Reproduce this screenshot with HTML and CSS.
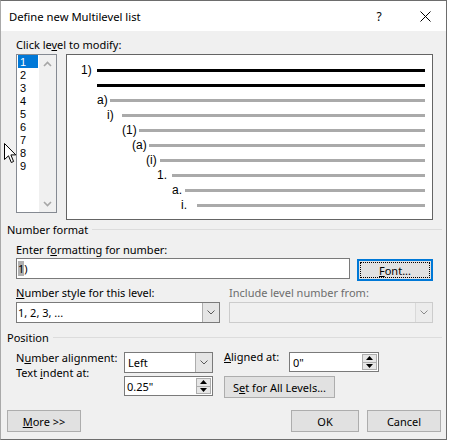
FILE: index.html
```html
<!DOCTYPE html>
<html>
<head>
<meta charset="utf-8">
<title>Define new Multilevel list</title>
<link rel="stylesheet" href="styles.css">
</head>
<body>
<div class="window">
  <div class="titlebar">
    <div class="title">Define new Multilevel list</div>
    <div class="tb-btn help">?</div>
    <div class="tb-btn close"><svg width="11" height="11" viewBox="0 0 11 11"><path d="M0.5 0.5L10.5 10.5M10.5 0.5L0.5 10.5" stroke="#000" stroke-width="1" fill="none"/></svg></div>
  </div>
  <div class="body">
    <div class="label first">Click le<u>v</u>el to modify:</div>
    <div class="top">
      <div class="listbox">
        <div class="items">
          <div class="item sel">1</div>
          <div class="item">2</div>
          <div class="item">3</div>
          <div class="item">4</div>
          <div class="item">5</div>
          <div class="item">6</div>
          <div class="item">7</div>
          <div class="item">8</div>
          <div class="item">9</div>
        </div>
        <div class="vscroll">
          <div class="sarrow"><svg width="9" height="6" viewBox="0 0 9 6"><polyline points="1,5 4.5,1.5 8,5" stroke="#a6a6a6" stroke-width="1.6" fill="none"/></svg></div>
          <div class="sarrow"><svg width="9" height="6" viewBox="0 0 9 6"><polyline points="1,1 4.5,4.5 8,1" stroke="#a6a6a6" stroke-width="1.6" fill="none"/></svg></div>
        </div>
      </div>
      <div class="preview">
        <div class="prow r1"><span class="plabel">1)</span><span class="pline black"></span></div>
        <div class="prow r2"><span class="pline black"></span></div>
        <div class="prow r3"><span class="plabel">a)</span><span class="pline"></span></div>
        <div class="prow r4"><span class="plabel">i)</span><span class="pline"></span></div>
        <div class="prow r5"><span class="plabel">(1)</span><span class="pline"></span></div>
        <div class="prow r6"><span class="plabel">(a)</span><span class="pline"></span></div>
        <div class="prow r7"><span class="plabel">(i)</span><span class="pline"></span></div>
        <div class="prow r8"><span class="plabel">1.</span><span class="pline"></span></div>
        <div class="prow r9"><span class="plabel">a.</span><span class="pline"></span></div>
        <div class="prow r10"><span class="plabel">i.</span><span class="pline"></span></div>
      </div>
    </div>

    <div class="group g1"><span class="gtext">Number format</span><span class="rule"></span></div>
    <div class="label fmt-label">Enter f<u>o</u>rmatting for number:</div>
    <div class="input-row">
      <div class="textbox"><span class="hl">1</span><span>)</span></div>
      <div class="btn font-btn"><span><u>F</u>ont...</span></div>
    </div>
    <div class="two labels">
      <div class="label half"><u>N</u>umber style for this level:</div>
      <div class="label half disabled-text">Include level number from:</div>
    </div>
    <div class="two selects">
      <div class="combo half">
        <div class="val">1, 2, 3, ...</div>
        <div class="arrow"><svg width="8" height="5" viewBox="0 0 8 5"><polyline points="0.5,0.5 4,4 7.5,0.5" stroke="#5a5a5a" stroke-width="1" fill="none"/></svg></div>
      </div>
      <div class="combo half disabled">
        <div class="val"></div>
        <div class="arrow"><svg width="8" height="5" viewBox="0 0 8 5"><polyline points="0.5,0.5 4,4 7.5,0.5" stroke="#8a8a8a" stroke-width="1" fill="none"/></svg></div>
      </div>
    </div>

    <div class="group g2"><span class="gtext">Position</span><span class="rule"></span></div>
    <div class="pos">
      <div class="pcol1">
        <div class="label">N<u>u</u>mber alignment:</div>
        <div class="label">Text <u>i</u>ndent at:</div>
      </div>
      <div class="pcol2">
        <div class="combo small">
          <div class="val">Left</div>
          <div class="arrow"><svg width="8" height="5" viewBox="0 0 8 5"><polyline points="0.5,0.5 4,4 7.5,0.5" stroke="#5a5a5a" stroke-width="1" fill="none"/></svg></div>
        </div>
        <div class="spin">
          <div class="val">0.25"</div>
          <div class="btns">
            <div class="b"><svg width="7" height="4" viewBox="0 0 7 4"><polygon points="0,4 3.5,0 7,4" fill="#000"/></svg></div>
            <div class="b"><svg width="7" height="4" viewBox="0 0 7 4"><polygon points="0,0 3.5,4 7,0" fill="#000"/></svg></div>
          </div>
        </div>
      </div>
      <div class="pcol3">
        <div class="aligned-row">
          <div class="label alabel"><u>A</u>ligned at:</div>
          <div class="spin aspin">
            <div class="val">0"</div>
            <div class="btns">
              <div class="b"><svg width="7" height="4" viewBox="0 0 7 4"><polygon points="0,4 3.5,0 7,4" fill="#000"/></svg></div>
              <div class="b"><svg width="7" height="4" viewBox="0 0 7 4"><polygon points="0,0 3.5,4 7,0" fill="#000"/></svg></div>
            </div>
          </div>
        </div>
        <div class="btn set-btn"><span>S<u>e</u>t for All Levels...</span></div>
      </div>
    </div>

    <div class="bottom">
      <div class="btn more"><span><u>M</u>ore &gt;&gt;</span></div>
      <div class="spacer"></div>
      <div class="btn ok"><span>OK</span></div>
      <div class="btn cancel"><span>Cancel</span></div>
    </div>
  </div>
  <svg class="cursor" width="13" height="21" viewBox="0 0 13 21"><path d="M0.5 0.5 L0.5 16.5 L4.5 12.8 L7.3 19.5 L9.6 18.5 L6.9 11.9 L11.8 11.9 Z" fill="#fff" stroke="#000" stroke-width="1" stroke-linejoin="miter"/></svg>
</div>
</body>
</html>
```

FILE: styles.css
```css
* { box-sizing: border-box; }
html, body { margin: 0; padding: 0; background: #ffffff; }
body {
  font-family: "Noto Sans", "Liberation Sans", sans-serif;
  font-size: 11px;
  line-height: 13px;
  color: #000;
}
u { text-underline-offset: 1px; }

.window {
  position: relative;
  width: 447px;
  height: 440px;
  border: 1px solid #6d6d6d;
  border-left-color: #a9a9a9;
  background: #f0f0f0;
  display: flex;
  flex-direction: column;
}

.titlebar {
  height: 30px;
  background: #ffffff;
  display: flex;
  align-items: center;
  padding-left: 8px;
  flex: none;
}
.title { flex: 1; font-size: 11.25px; white-space: nowrap; }
.tb-btn {
  height: 30px;
  display: flex;
  align-items: center;
  justify-content: center;
}
.help { width: 46px; font-size: 12px; }
.close { width: 44px; padding-left: 2px; }

.body {
  flex: 1;
  display: flex;
  flex-direction: column;
  padding: 0 13px 0 15px;
}

.label { height: 13px; white-space: nowrap; }
.first { margin-top: 7px; }

.top {
  display: flex;
  align-items: flex-start;
  gap: 9px;
  margin-top: 3px;
}
.listbox {
  width: 41px;
  height: 159px;
  border: 1px solid #858a92;
  background: #fff;
  display: flex;
}
.items { width: 22px; }
.item {
  height: 13px;
  margin: 0 1px;
  padding-left: 2px;
  font-family: "Liberation Sans", Arial, sans-serif;
  font-size: 11px;
  line-height: 13px;
  padding-top: 1px;
}
.item.sel { background: #0078d7; color: #fff; }
.vscroll {
  width: 17px;
  background: #f0f0f0;
  display: flex;
  flex-direction: column;
  justify-content: space-between;
}
.sarrow {
  height: 17px;
  display: flex;
  align-items: center;
  justify-content: center;
}

.preview {
  width: 367px;
  height: 166px;
  border: 1px solid #646464;
  background: #fff;
  padding: 8px 7px 0 0;
}
.prow {
  height: 15px;
  display: flex;
  align-items: center;
}
.plabel {
  flex: none;
  font-family: "Liberation Sans", Arial, sans-serif;
  font-size: 12px;
  line-height: 15px;
  white-space: nowrap;
}
.pline { flex: 1; height: 3px; background: #aaaaaa; }
.pline.black { background: #000; }
.r1 { padding-left: 14px; } .r1 .plabel { width: 16px; }
.r2 { padding-left: 30px; }
.r3 { padding-left: 30px; } .r3 .plabel { width: 13px; }
.r4 { padding-left: 40px; } .r4 .plabel { width: 15px; }
.r5 { padding-left: 55px; } .r5 .plabel { width: 17px; }
.r6 { padding-left: 65px; } .r6 .plabel { width: 17px; }
.r7 { padding-left: 79px; } .r7 .plabel { width: 14px; }
.r8 { padding-left: 90px; } .r8 .plabel { width: 15px; }
.r9 { padding-left: 105px; } .r9 .plabel { width: 13px; }
.r10 { padding-left: 114px; } .r10 .plabel { width: 16px; }

.group {
  display: flex;
  align-items: center;
  gap: 4px;
  height: 13px;
  margin-left: -9px;
  margin-right: -9px;
}
.g1 { margin-top: 3px; }
.g2 { margin-top: 8px; }
.gtext { white-space: nowrap; }
.rule { flex: 1; height: 1px; background: #dcdcdc; }

.fmt-label { margin-top: 7px; }
.input-row {
  display: flex;
  align-items: flex-start;
  gap: 7px;
  height: 23px;
  margin-top: 2px;
}
.textbox {
  width: 334px;
  height: 21px;
  border: 1px solid #7a7a7a;
  background: #fff;
  display: flex;
  align-items: center;
  padding-left: 1px;
}
.hl {
  background: #b0b0b0;
  height: 15px;
  line-height: 15px;
  display: inline-block;
}

.btn {
  height: 22px;
  border: 1px solid #adadad;
  background: #e1e1e1;
  display: flex;
  align-items: center;
  justify-content: center;
  white-space: nowrap;
}
.font-btn {
  width: 76px;
  margin-top: 1px;
  border: 2px solid #0078d7;
  outline: 1px dotted #000;
  outline-offset: -4px;
}

.two { display: flex; gap: 9px; }
.half { width: 204px; }
.labels { margin-top: 5px; }
.selects { margin-top: 3px; }
.disabled-text { color: #6d6d6d; }

.combo {
  height: 21px;
  border: 1px solid #7a7a7a;
  background: #fff;
  display: flex;
}
.combo .val {
  flex: 1;
  display: flex;
  align-items: center;
  padding-left: 1px;
  white-space: nowrap;
}
.combo .arrow {
  width: 17px;
  background: #e5e5e5;
  border-left: 1px solid #adadad;
  display: flex;
  align-items: center;
  justify-content: center;
}
.combo.disabled { border-color: #cccccc; background: #f0f0f0; }
.combo.disabled .arrow { background: #ececec; border-left-color: #d9d9d9; }

.pos {
  display: flex;
  height: 48px;
  margin-top: 6px;
}
.pcol1 {
  width: 108px;
  padding-top: 1px;
  display: flex;
  flex-direction: column;
  gap: 2px;
}
.pcol2 {
  width: 89px;
  padding-top: 2px;
  display: flex;
  flex-direction: column;
  gap: 3px;
}
.combo.small .val { padding-left: 3px; }
.pcol3 {
  margin-left: 11px;
  display: flex;
  flex-direction: column;
}
.aligned-row { display: flex; align-items: flex-start; }
.alabel { width: 65px; }

.spin {
  height: 20px;
  border: 1px solid #7a7a7a;
  background: #fff;
  display: flex;
}
.spin .val {
  flex: 1;
  display: flex;
  align-items: center;
  padding-left: 2px;
  white-space: nowrap;
}
.aspin { width: 90px; margin-top: 2px; }
.aspin .val { padding-left: 3px; }
.spin .btns {
  width: 15px;
  margin: 1px;
  border: 1px solid #adadad;
  background: #e6e6e6;
  display: flex;
  flex-direction: column;
}
.spin .b {
  flex: 1;
  display: flex;
  align-items: center;
  justify-content: center;
}
.spin .b + .b { border-top: 1px solid #adadad; }

.set-btn { width: 111px; margin-top: 4px; }

.bottom {
  display: flex;
  margin: 12px -8px 0 -9px;
}
.spacer { flex: 1; }
.more { width: 74px; }
.ok { width: 68px; margin-right: 8px; }
.cancel { width: 74px; }

.cursor {
  position: absolute;
  left: 3px;
  top: 142px;
}
```
